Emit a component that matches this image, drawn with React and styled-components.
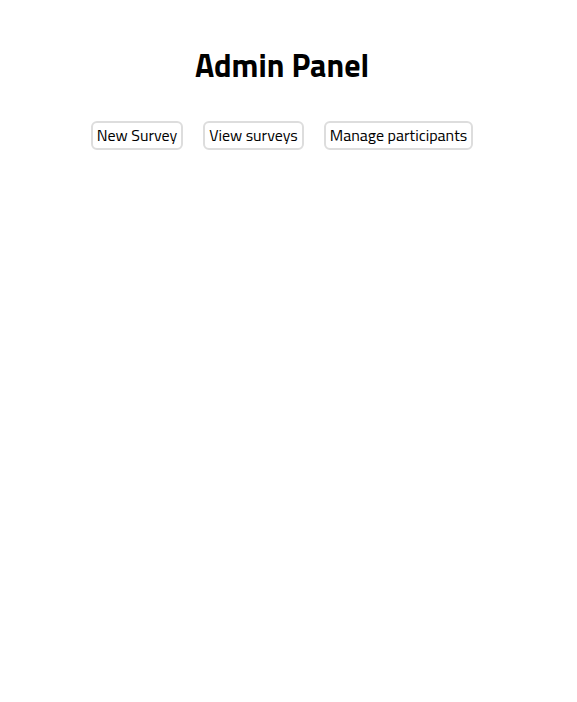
import React from 'react';
import styled, { createGlobalStyle } from 'styled-components';

const GlobalStyle = createGlobalStyle`
  body {
    margin: 8px;
    background: #fff;
    font-family: "Titillium Web", Roboto, "Liberation Sans", sans-serif;
  }
`;

function App() {
  return (
    <>
      <GlobalStyle />
      <Container>
        <Title>Admin Panel</Title>
        <Nav>
          <NavButton>New Survey</NavButton>
          <NavButton>View surveys</NavButton>
          <NavButton>Manage participants</NavButton>
        </Nav>
      </Container>
    </>
  );
}

export default App;

const Container = styled.div`
  width: 548px;
  display: flex;
  flex-direction: column;
  align-items: center;
`;

const Title = styled.h1`
  margin: 33px 0 32px;
  font-size: 32px;
  font-weight: 700;
  color: #000;
`;

const Nav = styled.div`
  display: flex;
  gap: 20px;
`;

const NavButton = styled.button`
  font-family: inherit;
  font-size: 16px;
  line-height: 25px;
  color: #000;
  background: #fff;
  border: 2px solid #ddd;
  border-radius: 6px;
  padding: 0 4px;
  cursor: pointer;
`;
